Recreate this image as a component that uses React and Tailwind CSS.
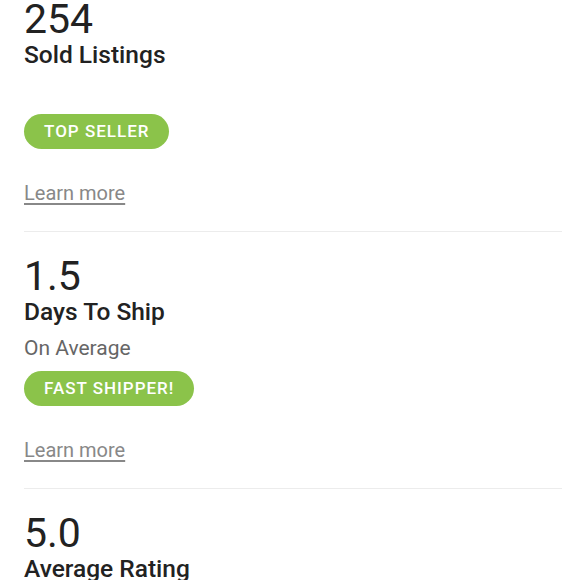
import React from 'react';

const stats = [
  { value: '254', label: 'Sold Listings', sub: '', badge: 'TOP SELLER' },
  { value: '1.5', label: 'Days To Ship', sub: 'On Average', badge: 'FAST SHIPPER!' },
  { value: '5.0', label: 'Average Rating', sub: '', badge: 'FIVE STARS' },
];

const StatBlock = ({ stat, last }) => (
  <div className={`py-6 ${last ? '' : 'border-b border-[#ececec]'}`}>
    <div className="text-[41px] leading-[40px] text-[#222]">{stat.value}</div>
    <div className="text-[24.5px] leading-[32px] font-medium text-[#222]">{stat.label}</div>
    <div className="text-[21px] leading-[40px] text-[#666] h-[40px]">{stat.sub}</div>
    <div className="mt-[3px]">
      <span className="inline-flex items-center h-[35px] px-[20px] rounded-full bg-[#8bc34a] text-white text-[17px] font-medium tracking-[1px]">
        {stat.badge}
      </span>
    </div>
    <div className="mt-[32px]">
      <a href="#" className="text-[20px] leading-[24px] text-[#888] underline underline-offset-[3px]">
        Learn more
      </a>
    </div>
  </div>
);

export default function App() {
  return (
    <div className="bg-white font-['Roboto',sans-serif] overflow-hidden h-[580px]">
      <div className="pl-6 pr-[18px] -mt-[25px]">
        {stats.map((s, i) => (
          <StatBlock key={s.value} stat={s} last={i === stats.length - 1} />
        ))}
      </div>
    </div>
  );
}
